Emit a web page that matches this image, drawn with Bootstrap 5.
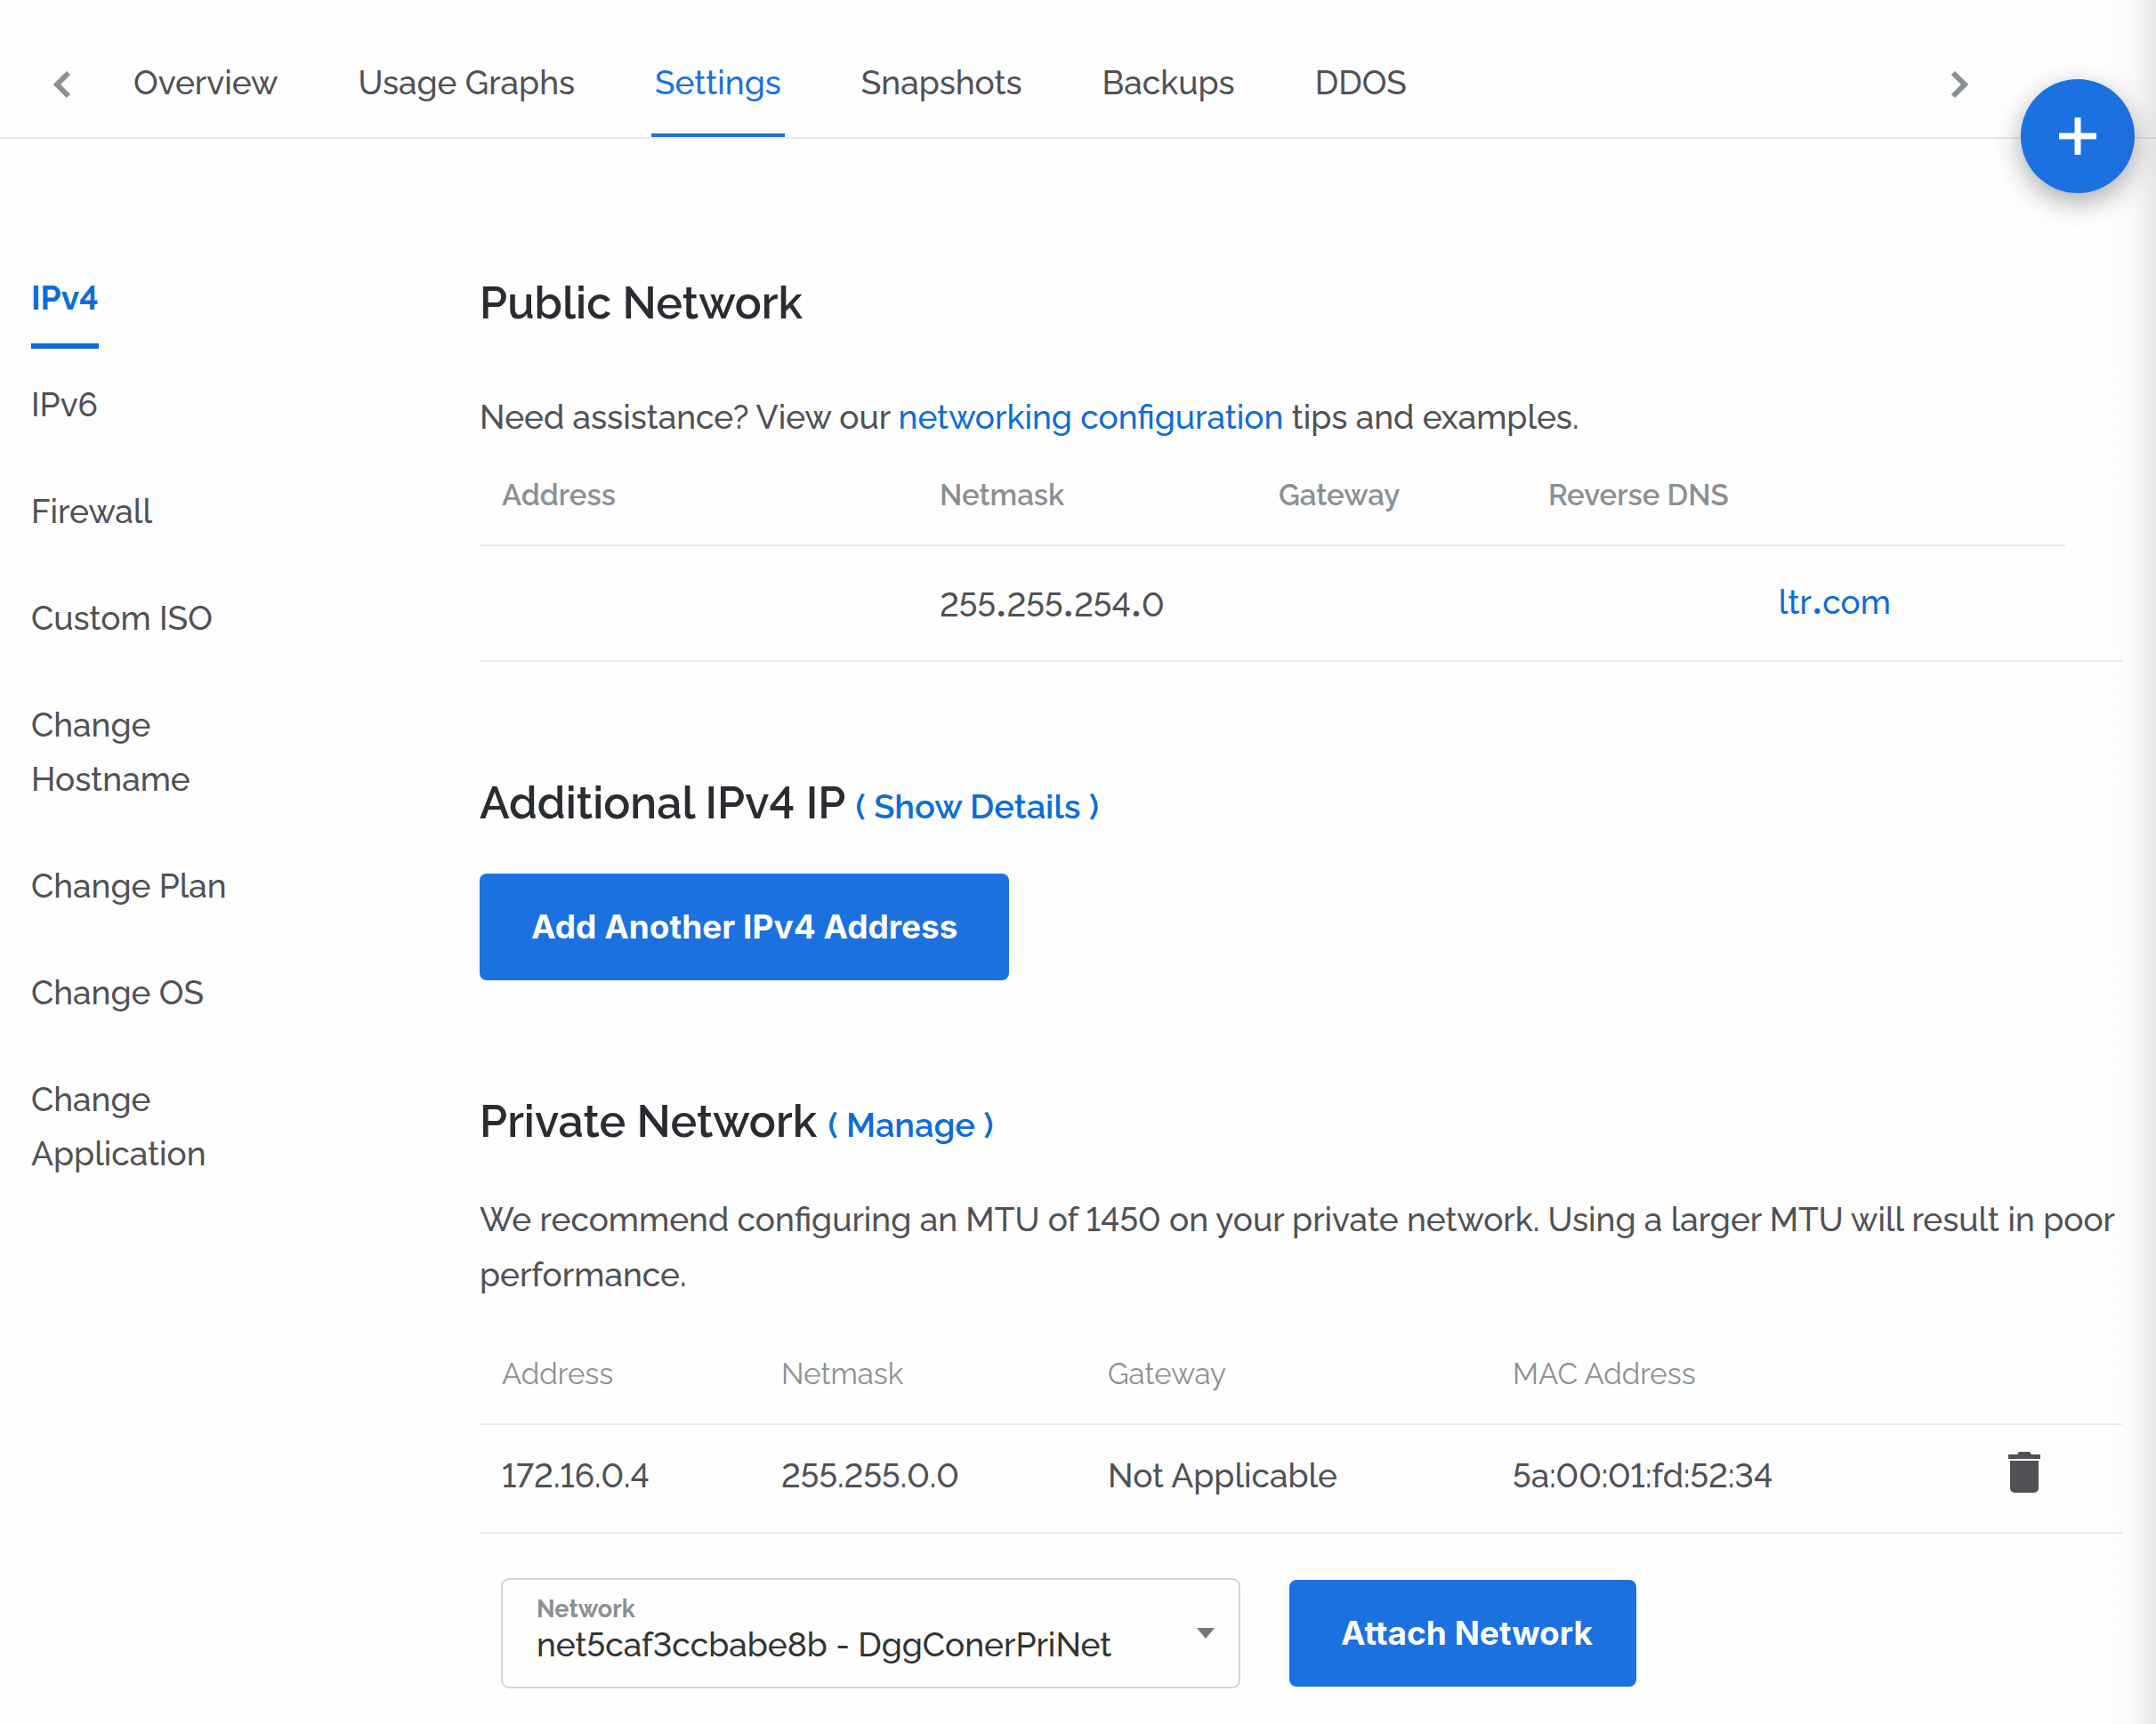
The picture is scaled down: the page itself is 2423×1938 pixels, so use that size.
<!DOCTYPE html>
<html lang="en">
<head>
<meta charset="utf-8">
<meta name="viewport" content="width=device-width, initial-scale=1">
<title>Settings - IPv4</title>
<link rel="stylesheet" href="https://cdn.jsdelivr.net/npm/bootstrap@5.3.0/dist/css/bootstrap.min.css">
<style>
  :root { --brand: #1b71df; --link: #0b6ddb; --ink: #505155; --muted: #8b9095; --rule: #e7ebf0; }
  body { font-family: Raleway, Lato, "Open Sans", sans-serif; font-variant-numeric: lining-nums; font-size: 37px; font-weight: 500; line-height: 62px; color: var(--ink); background: #fefefe; overflow-x: hidden; }
  a { color: var(--link); text-decoration: none; }
  button svg { display: block; }
  .icon-btn { border: 0; background: none; padding: 0; color: var(--muted); }

  .topbar { height: 156px; border-bottom: 2px solid var(--rule); padding: 0 208px 0 56px; }
  .topbar .icon-btn { padding-top: 35px; }
  .tabs { margin-left: 66px; gap: 82px; }
  .tabs .nav-link { padding: 62px 4px 26px; color: var(--ink); border-bottom: 4px solid transparent; }
  .tabs .nav-link.active { color: var(--brand); border-color: var(--brand); }

  .fab { position: absolute; top: 89px; right: 24px; width: 128px; height: 128px; background: var(--brand); color: #fff; box-shadow: 0 10px 30px rgba(40, 45, 50, .4); }
  .edge-shade { position: absolute; top: 0; right: 0; bottom: 0; width: 54px; pointer-events: none; background: linear-gradient(to right, rgba(0,0,0,0), rgba(0,0,0,.02) 50%, rgba(0,0,0,.09)); }

  .layout { padding: 149px 38px 40px 35px; }
  .side { flex: 0 0 504px; line-height: 61px; }
  .side .nav { width: 250px; }
  .side .nav-link { padding: 0; margin-bottom: 59px; color: var(--ink); }
  .side .nav-link.active { color: var(--link); font-weight: 700; align-self: flex-start; border-bottom: 6px solid var(--link); padding-bottom: 20px; margin-bottom: 33px; }

  h2 { font-size: 50px; font-weight: 600; line-height: 62px; color: #292c31; margin: 0 0 44px; }
  h2 a { font-size: 38px; }
  p { margin: 0; }
  .panel { padding-top: 5px; }
  .panel .intro { padding-top: 22px; }
  .sect { margin-bottom: 128px; }
  .cta { font-family: Inter, sans-serif; font-weight: 700; font-size: 37px; line-height: 56px; padding: 32px 58px; border: 0; border-radius: 8px; background: var(--brand); color: #fff; }
  .cta-attach { padding-right: 49px; }

  .ip-table { table-layout: fixed; width: 100%; }
  .ip-table th, .ip-table td { padding: 0 0 0 25px; border-bottom: 2px solid var(--rule); vertical-align: middle; white-space: nowrap; }
  .ip-table th { font-size: 33px; color: var(--muted); font-weight: 400; padding-top: 2px; }
  .ip-table.strong-head th { font-weight: 600; }
  .ip-table tbody tr { height: 130px; }
  .ip-table tbody td { padding-top: 4px; }
  .ip-table thead tr { height: 113px; }
  .ip-table .dns { text-align: right; padding-right: 196px; padding-bottom: 6px; }
  .ip-table .no-rule { border-bottom: 0; }
  .ip-table .dot { font-family: Inter, sans-serif; font-weight: 700; }
  .private-table thead tr { height: 137px; }
  .private-table th { padding-top: 26px; }
  .private-table tbody tr { height: 122px; }
  .private-table tbody td { padding-bottom: 10px; }
  .private-table tbody .act { padding-bottom: 0; }

  .attach-row { margin-top: 50px; padding-left: 24px; gap: 55px; }
  .net-pick { width: 831px; }
  .net-pick > label { font-size: 27px; line-height: 34px; font-weight: 700; color: var(--muted) !important; padding: 18px 0 0 40px; height: auto; border: 0; opacity: 1 !important; transform: none !important; }
  .net-pick > .form-select { height: 124px; padding: 44px 90px 18px 38px !important; font-size: 37px; font-weight: 500; font-variant-numeric: lining-nums; line-height: 58px; color: #333; border: 2px solid #d5d5da; border-radius: 9px; background-color: transparent;
    background-image: url("data:image/svg+xml,%3Csvg xmlns='http://www.w3.org/2000/svg' viewBox='0 0 20 12'%3E%3Cpath fill='%23767676' d='M0 0h20L10 12z'/%3E%3C/svg%3E"); background-size: 20px 12px; background-position: right 27px center; }
</style>
<script src="https://cdn.jsdelivr.net/npm/bootstrap@5.3.0/dist/js/bootstrap.bundle.min.js"></script>
</head>
<body class="position-relative min-vh-100">
<header class="topbar d-flex align-items-stretch">
  <button class="icon-btn" type="button" aria-label="Previous tabs">
    <svg width="24" height="32" viewBox="0 0 24 32" fill="none" stroke="currentColor" stroke-width="6"><path d="M21 3 8 16l13 13"/></svg>
  </button>
  <nav class="nav tabs flex-nowrap flex-grow-1">
    <a class="nav-link" href="#">Overview</a>
    <a class="nav-link" href="#">Usage Graphs</a>
    <a class="nav-link active" href="#" aria-current="page">Settings</a>
    <a class="nav-link" href="#">Snapshots</a>
    <a class="nav-link" href="#">Backups</a>
    <a class="nav-link" href="#">DDOS</a>
  </nav>
  <button class="icon-btn" type="button" aria-label="Next tabs">
    <svg width="24" height="32" viewBox="0 0 24 32" fill="none" stroke="currentColor" stroke-width="6"><path d="m4 3 13 13L4 29"/></svg>
  </button>
</header>

<div class="layout d-flex">
  <aside class="side">
    <nav class="nav flex-column">
      <a class="nav-link active" href="#" aria-current="page">IPv4</a>
      <a class="nav-link" href="#">IPv6</a>
      <a class="nav-link" href="#">Firewall</a>
      <a class="nav-link" href="#">Custom ISO</a>
      <a class="nav-link" href="#">Change Hostname</a>
      <a class="nav-link" href="#">Change Plan</a>
      <a class="nav-link" href="#">Change OS</a>
      <a class="nav-link" href="#">Change Application</a>
    </nav>
  </aside>

  <main class="panel flex-grow-1">
    <section class="sect">
      <h2>Public Network</h2>
      <p class="intro">Need assistance? View our <a href="#">networking configuration</a> tips and examples.</p>
      <table class="ip-table strong-head">
        <colgroup><col style="width:26.65%"><col style="width:20.64%"><col style="width:16.41%"><col style="width:32.83%"><col style="width:3.47%"></colgroup>
        <thead><tr><th>Address</th><th>Netmask</th><th>Gateway</th><th>Reverse DNS</th><td class="no-rule"></td></tr></thead>
        <tbody><tr><td></td><td>255<span class="dot">.</span>255<span class="dot">.</span>254<span class="dot">.</span>0</td><td></td><td class="dns"><a href="#">ltr<span class="dot">.</span>com</a></td><td></td></tr></tbody>
      </table>
    </section>

    <section class="sect">
      <h2>Additional IPv4 IP <a href="#">( Show Details )</a></h2>
      <button class="btn cta" type="button">Add Another IPv4 Address</button>
    </section>

    <section>
      <h2>Private Network <a href="#">( Manage )</a></h2>
      <p>We recommend configuring an MTU of 1450 on your private network. Using a larger MTU will result in poor performance.</p>
      <table class="ip-table private-table">
        <colgroup><col style="width:17.01%"><col style="width:19.88%"><col style="width:24.65%"><col style="width:30.17%"><col style="width:8.29%"></colgroup>
        <thead><tr><th>Address</th><th>Netmask</th><th>Gateway</th><th>MAC Address</th><th></th></tr></thead>
        <tbody><tr><td>172.16.0.4</td><td>255.255.0.0</td><td>Not Applicable</td><td>5a:00:01:fd:52:34</td>
          <td class="act"><button class="icon-btn" type="button" aria-label="Detach network"><svg width="36" height="46" viewBox="0 0 36 46" fill="#505155"><path d="M0 3h10l2-3h12l2 3h10v5H0zM2 10h32v31a5 5 0 0 1-5 5H7a5 5 0 0 1-5-5z"/></svg></button></td></tr></tbody>
      </table>
      <div class="attach-row d-flex align-items-center">
        <div class="form-floating net-pick">
          <select class="form-select" id="network"><option>net5caf3ccbabe8b - DggConerPriNet</option></select>
          <label for="network">Network</label>
        </div>
        <button class="btn cta cta-attach" type="button">Attach Network</button>
      </div>
    </section>
  </main>
</div>
<button class="btn fab rounded-circle p-0 d-flex align-items-center justify-content-center" type="button" aria-label="Deploy">
  <svg width="42" height="42" viewBox="0 0 42 42" stroke="currentColor" stroke-width="7"><path d="M21 0v42M0 21h42"/></svg>
</button>
<div class="edge-shade"></div>
</body>
</html>
